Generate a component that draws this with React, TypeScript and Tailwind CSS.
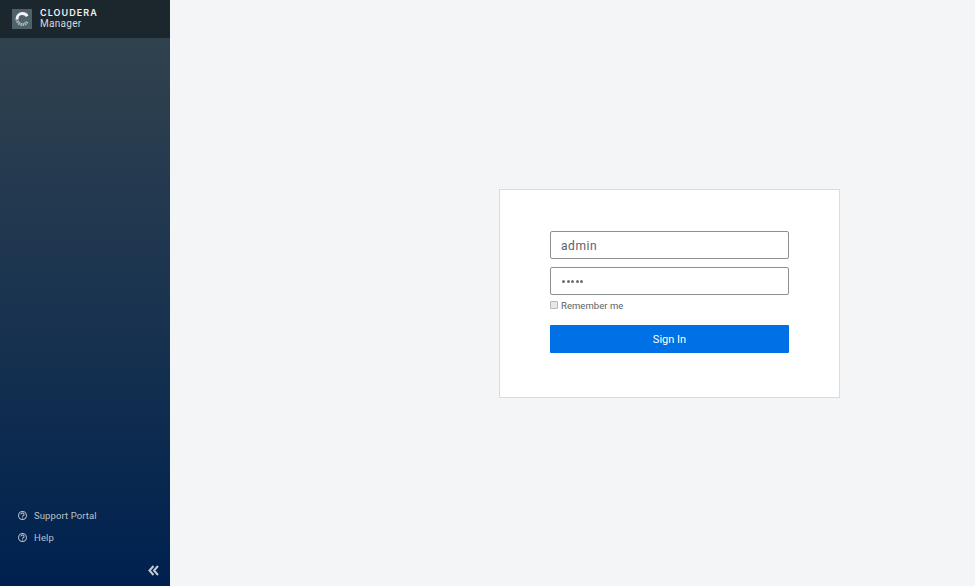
import React from "react";

function HelpIcon() {
  return (
    <svg width="9" height="9" viewBox="0 0 16 16" fill="none" stroke="#b9c3ca" strokeWidth="1.8" className="shrink-0">
      <circle cx="8" cy="8" r="7" />
      <path d="M5.2 6.2a2.8 2.5 0 1 1 4 2.2c-.8.5-1.2 1-1.2 2" />
      <path d="M8 11.4v1.8" />
    </svg>
  );
}

function Logo() {
  return (
    <div className="w-[20px] h-[20px] bg-[#4f6269] flex items-center justify-center shrink-0">
      <svg width="16" height="16" viewBox="0 0 16 16" fill="none">
        <path d="M13.2 5.2A5.6 5.6 0 0 0 8 2.6 5.4 5.4 0 0 0 3 8" stroke="#f2f4f5" strokeWidth="3" />
        <path d="M3 8a5.4 5.4 0 0 0 5 5.4 5.6 5.6 0 0 0 5.2-2.6" stroke="#a9b6bb" strokeWidth="3" strokeDasharray="1.5 0.6" />
      </svg>
    </div>
  );
}

export default function App() {
  return (
    <div className="flex w-[975px] h-[586px] overflow-hidden bg-[#f4f5f7] font-['Roboto',sans-serif]">
      <aside className="w-[170px] shrink-0 flex flex-col bg-gradient-to-b from-[#34444e] to-[#00214f]">
        <div className="h-[38px] bg-[#1c272d] flex items-center gap-[8px] pl-3 shrink-0">
          <Logo />
          <div className="flex flex-col text-white -mt-[3px]">
            <span className="text-[9px] leading-[11px] font-semibold tracking-[1.05px] font-['Inter',sans-serif] text-[#eef0f1]">CLOUDERA</span>
            <span className="text-[10px] leading-[11px] tracking-[0.3px] text-[#d5d9dc]">Manager</span>
          </div>
        </div>
        <div className="flex-1" />
        <nav className="flex flex-col gap-[11px] pl-[18px] text-[9.5px] leading-[11px] text-[#b9c3ca] tracking-[0.1px]">
          <a className="flex items-center gap-[7px]"><HelpIcon />Support Portal</a>
          <a className="flex items-center gap-[7px]"><HelpIcon />Help</a>
        </nav>
        <div className="flex justify-end pr-[11px] pt-[22px] pb-[10px]">
          <svg width="11" height="11" viewBox="0 0 11 11" fill="none" stroke="#c3ccd3" strokeWidth="2">
            <path d="M5.5 1 1.5 5.5 5.5 10" />
            <path d="M10 1 6 5.5 10 10" />
          </svg>
        </div>
      </aside>
      <main className="flex-1 flex items-start pt-[189px] pl-[329px]">
        <form className="w-[341px] h-[209px] bg-white border border-[#d9dcde] pt-[41px] px-[50px] flex flex-col">
          <input
            readOnly
            value="admin"
            className="w-[239px] h-[28px] border border-[#8b9093] rounded-[2px] pl-[10px] pr-[11px] pt-[1px] text-[12px] tracking-[0.55px] text-[#5a6168] outline-none"
          />
          <div className="mt-[8px] w-[239px] h-[28px] border border-[#8b9093] rounded-[2px] pl-[11px] flex items-center gap-[1.5px]">
            <i className="w-[3px] h-[3px] rounded-full bg-[#6a7177]" />
            <i className="w-[3px] h-[3px] rounded-full bg-[#6a7177]" />
            <i className="w-[3px] h-[3px] rounded-full bg-[#6a7177]" />
            <i className="w-[3px] h-[3px] rounded-full bg-[#6a7177]" />
            <i className="w-[3px] h-[3px] rounded-full bg-[#6a7177]" />
          </div>
          <label className="mt-[6px] flex items-center h-[10px] text-[9.5px] tracking-[0.05px] text-[#5a6168]">
            <span className="w-[8px] h-[8px] -mt-[3px] bg-[#e6e7e8] border border-[#b5b8ba] rounded-[1px] mr-[3px]" />
            Remember me
          </label>
          <button type="button" className="mt-[14px] w-[239px] h-[28px] pt-[2px] bg-[#0070e6] rounded-[1px] text-white text-[11px]">
            Sign In
          </button>
        </form>
      </main>
    </div>
  );
}
